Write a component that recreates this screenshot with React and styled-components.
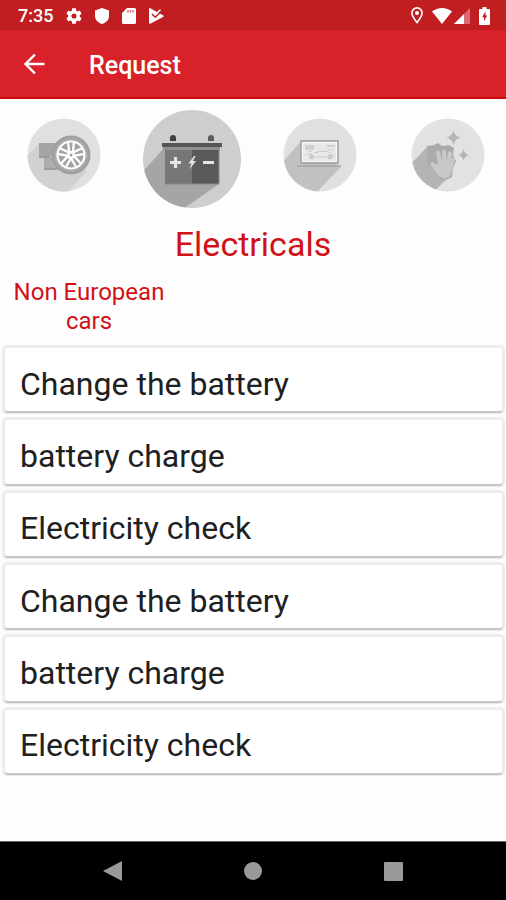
import React from "react";
import styled, { createGlobalStyle } from "styled-components";

const GlobalStyle = createGlobalStyle`
  * { box-sizing: border-box; }
  body {
    margin: 0;
    background: #fdfdfd;
    font-family: Roboto, "Liberation Sans", sans-serif;
  }
  button { font: inherit; color: inherit; border: 0; padding: 0; background: none; cursor: pointer; }
  svg { display: block; }
`;

const Screen = styled.div`
  display: flex;
  flex-direction: column;
  min-height: 100vh;
  overflow: hidden;
`;

const StatusBar = styled.div`
  display: flex;
  align-items: center;
  justify-content: space-between;
  height: 30px;
  padding: 1px 16px 0 18px;
  background: #c11e22;
  color: #fff;
`;

const StatusGroup = styled.div`
  display: flex;
  align-items: center;
  gap: ${(p) => p.$gap};
`;

const Clock = styled.time`
  font-size: 18px;
  font-weight: 500;
  line-height: 28px;
`;

const AppBar = styled.header`
  display: flex;
  align-items: center;
  gap: 41px;
  height: 69px;
  padding: 0 20px;
  background: #d82128;
  border-bottom: 2px solid #c9090c;
  color: #fff;
`;

const BackButton = styled.button`
  width: 28px;
  height: 28px;
`;

const Title = styled.h1`
  margin: 0;
  padding-top: 4px;
  font-size: 25px;
  font-weight: 500;
  line-height: 30px;
`;

const Categories = styled.nav`
  display: grid;
  grid-auto-flow: column;
  grid-auto-columns: 128px;
  height: 118px;
  padding-top: 11px;
`;

const CategoryButton = styled.button`
  display: flex;
  justify-content: center;
  align-items: flex-start;
  padding-top: ${(p) => (p.$active ? "0" : "8px")};
  opacity: ${(p) => (p.$active ? 1 : 0.5)};

  svg {
    width: ${(p) => (p.$active ? "98px" : "74px")};
    height: ${(p) => (p.$active ? "98px" : "74px")};
  }
`;

const Content = styled.main`
  flex: 1;
`;

const Heading = styled.h2`
  margin: 0;
  padding-top: 7px;
  font-size: 34px;
  font-weight: 400;
  line-height: 40px;
  text-align: center;
  color: #d01218;
`;

const GroupLabel = styled.h3`
  width: 162px;
  margin: 14px 8px 12px;
  font-size: 24px;
  font-weight: 400;
  line-height: 29px;
  text-align: center;
  color: #d01218;
`;

const ServiceList = styled.ul`
  display: grid;
  grid-auto-rows: 1fr;
  gap: 9px;
  min-height: 425px;
  margin: 0 4px 0 5px;
  padding: 0;
  list-style: none;
`;

const ServiceItem = styled.li`
  display: flex;
`;

const ServiceCard = styled.button`
  flex: 1;
  padding: 8px 15px 0;
  border-radius: 2px;
  background: #fff;
  box-shadow: 0 2px 1px #c4c4c4, 0 0 1px 3px #ededed;
  font-size: 32px;
  line-height: 38px;
  text-align: left;
  color: #202020;
`;

const SystemNav = styled.nav`
  display: flex;
  justify-content: center;
  height: 59px;
  border-top: 1px solid #666;
  background: #000;
`;

const SystemButton = styled.button`
  display: flex;
  align-items: center;
  justify-content: center;
  width: 140px;
`;

const GearIcon = () => (
  <svg width="16" height="16" viewBox="2 2 20 20" fill="#fff" aria-hidden="true">
    <path d="M19.14 12.94c.04-.3.06-.61.06-.94 0-.32-.02-.64-.07-.94l2.03-1.58c.18-.14.23-.41.12-.61l-1.92-3.32c-.12-.22-.37-.29-.59-.22l-2.39.96c-.5-.38-1.03-.7-1.62-.94l-.36-2.54c-.04-.24-.24-.41-.48-.41h-3.84c-.24 0-.43.17-.47.41l-.36 2.54c-.59.24-1.13.57-1.62.94l-2.39-.96c-.22-.08-.47 0-.59.22L2.74 8.87c-.12.21-.08.47.12.61l2.03 1.58c-.05.3-.09.63-.09.94s.02.64.07.94l-2.03 1.58c-.18.14-.23.41-.12.61l1.92 3.32c.12.22.37.29.59.22l2.39-.96c.5.38 1.03.7 1.62.94l.36 2.54c.05.24.24.41.48.41h3.84c.24 0 .44-.17.47-.41l.36-2.54c.59-.24 1.13-.56 1.62-.94l2.39.96c.22.08.47 0 .59-.22l1.92-3.32c.12-.22.07-.47-.12-.61l-2.01-1.58zM12 15.2A3.2 3.2 0 1 1 12 8.8a3.2 3.2 0 0 1 0 6.4z" />
  </svg>
);

const ShieldIcon = () => (
  <svg width="14" height="16" viewBox="0 0 14 16" fill="#fff" aria-hidden="true">
    <path d="M7 0 14 2.5V8c0 3.700-2.800 6.700-7 8-4.200-1.300-7-4.300-7-8V2.500z" />
  </svg>
);

const SdCardIcon = () => (
  <svg width="14" height="16" viewBox="0 0 14 16" aria-hidden="true">
    <path fill="#fff" d="M5 0h7.500A1.500 1.500 0 0 1 14 1.500v13a1.500 1.500 0 0 1-1.500 1.500h-11A1.500 1.500 0 0 1 0 14.500V5z" />
    <path stroke="#d5686b" strokeWidth="1.400" d="M6 2v2.500M8.500 2v2.500M11 2v2.500" />
  </svg>
);

const PlayCheckIcon = () => (
  <svg width="15" height="16" viewBox="0 0 15 16" aria-hidden="true">
    <path fill="#fff" d="M0 1.200C0 .2.800-.2 1.700.4L14 7.200c.9.500.9 1.200 0 1.700L1.700 15.600C.8 16.100 0 15.800 0 14.800z" />
    <path fill="none" stroke="#c11e22" strokeWidth="1.500" d="M3 6 6.300 9.200 12.500 3.300" />
    <path fill="none" stroke="#fff" strokeWidth="1.500" d="M6.300 6.500 11.500 1.700" />
  </svg>
);

const LocationIcon = () => (
  <svg width="12" height="17" viewBox="0 0 12 17" aria-hidden="true">
    <path fill="none" stroke="#fff" strokeWidth="1.600" d="M6 15.500C4 12.800.9 9.200.9 6a5.100 5.100 0 0 1 10.200 0c0 3.200-3.100 6.800-5.100 9.500z" />
    <circle cx="6" cy="6" r="2" fill="#fff" />
  </svg>
);

const WifiIcon = () => (
  <svg width="20" height="16" viewBox="0 0 20 16" fill="#fff" aria-hidden="true">
    <path d="M10 16 0 3.500C3 1.200 6.300 0 10 0s7 1.200 10 3.500z" />
  </svg>
);

const SignalIcon = () => (
  <svg width="16" height="16" viewBox="0 0 16 16" fill="#fff" aria-hidden="true">
    <path opacity=".35" d="M0 16 16 0v16z" />
    <path d="M0 16 10 6v10z" />
  </svg>
);

const BatteryIcon = () => (
  <svg width="11" height="18" viewBox="0 0 11 18" aria-hidden="true">
    <path fill="#fff" d="M3.500 0h4v2H10q1 0 1 1v14q0 1-1 1H1q-1 0-1-1V3q0-1 1-1h2.500z" />
    <path fill="#c11e22" d="M6.500 4.500 3 10.300h2v4l3.200-5.800H6.500z" />
  </svg>
);

const ArrowBackIcon = () => (
  <svg width="28" height="28" viewBox="0 0 28 28" fill="none" stroke="#fff" strokeWidth="2.400" aria-hidden="true">
    <path d="M24.500 14H6M15 4.500 5.500 14l9.500 9.500" />
  </svg>
);

const WheelIcon = () => (
  <svg viewBox="0 0 74 74" aria-hidden="true">
    <clipPath id="wheel-disc"><circle cx="37" cy="37" r="36.500" /></clipPath>
    <g clipPath="url(#wheel-disc)">
      <path fill="#c4c4c4" d="M0 0h74v74H0z" />
      <path fill="#a6a6a6" d="M-9 48 12 25 60 53 35 80H0z" />
    </g>
    <path fill="#505050" d="M12 25h18v13H12z" />
    <path fill="#606060" d="M17 39h20v12H17z" />
    <path fill="#3d3d3d" d="M12 38h11v2H12zM17 50h17v2H17z" />
    <circle cx="44" cy="37" r="19.500" fill="#444" />
    <circle cx="44" cy="37" r="17" fill="#5a5a5a" />
    <circle cx="44" cy="37" r="13.500" fill="#4a4a4a" stroke="#fff" strokeWidth="2.200" />
    <g stroke="#fff" strokeWidth="2.300">
      {[0, 72, 144, 216, 288].map((angle) => (
        <path key={angle} transform={`rotate(${angle} 44 37)`} d="M42.300 35 41 24M45.700 35 47 24" />
      ))}
    </g>
    <circle cx="44" cy="37" r="4" fill="#fff" />
    <circle cx="44" cy="37" r="1.500" fill="#4a4a4a" />
  </svg>
);

const CarBatteryIcon = () => (
  <svg viewBox="0 0 98 98" aria-hidden="true">
    <clipPath id="battery-disc"><circle cx="49" cy="49" r="49" /></clipPath>
    <g clipPath="url(#battery-disc)">
      <path fill="#cecece" d="M0 0h98v98H0z" />
      <path fill="#a5a5a5" d="M-4 66 22 37 76 74 30 106H0z" />
    </g>
    <path fill="#414141" d="M27 31v-3q0-3 3-3t3 3v3z" />
    <path fill="#5c5c5c" d="M65 31v-3q0-3 3-3t3 3v3z" />
    <path fill="#777" d="M22 37h54v37H22z" />
    <path fill="#595959" d="M49 37h27v37H49z" />
    <path fill="#909090" d="M20 37h57v3H20z" />
    <path fill="#565656" d="M19 33h60v4H19z" />
    <path stroke="#e4e4e4" strokeWidth="3.200" d="M27 52.500h11M32.500 47v11M60 52.500h11" />
    <path fill="#e4e4e4" d="M51 46 45.500 53.500h3l-2 6 6.500-8.500h-3.300l3-5z" />
    <path fill="none" stroke="#888" d="M22 74h54V40" />
  </svg>
);

const LaptopIcon = () => (
  <svg viewBox="0 0 74 74" aria-hidden="true">
    <clipPath id="laptop-disc"><circle cx="37" cy="37" r="36.500" /></clipPath>
    <g clipPath="url(#laptop-disc)">
      <path fill="#c4c4c4" d="M0 0h74v74H0z" />
      <path fill="#878787" d="M-6 51 17 24 58 49 28 80H0z" />
    </g>
    <path fill="#d4d4d4" stroke="#5b5b5b" strokeWidth="1.800" d="M18 23h37v22H18z" />
    <path fill="none" stroke="#f4f4f4" d="M19.500 24.500h34v19h-34z" />
    <path fill="#5d5d5d" d="M14 47h44v2H14z" />
    <path fill="#a4a4a4" d="M22 27h9v5h-9zM44 27h8v2h-8zM25 33h4v1h-4zM45 31h6v1h-6z" />
    <g fill="none" stroke="#999" strokeWidth="1">
      <path d="M31 34.500h3l2-1h8l4 1.500M32 39h12M22 38l2-2h4l2 1M45 37h5l2 2" />
      <circle cx="28.500" cy="39" r="2" fill="#999" />
      <circle cx="47" cy="39" r="2" fill="#999" />
    </g>
  </svg>
);

const CleaningIcon = () => (
  <svg viewBox="0 0 74 74" aria-hidden="true">
    <clipPath id="cleaning-disc"><circle cx="37" cy="37" r="36.500" /></clipPath>
    <g clipPath="url(#cleaning-disc)">
      <path fill="#c8c8c8" d="M0 0h74v74H0z" />
      <path fill="#6d6d6d" d="M-8 54 17 28 39 58 16 80H0z" />
    </g>
    <path fill="#5c5c5c" d="m16 28 7-1 4-2 4 3 7-1 5 3-1 7 3 6-3 7-1 9-6 3-5-1-9-11-5-3z" />
    <path fill="#949494" d="m34 61-6-3-5-6-4-6q1-3 4-1l4 2-2-13q1-3 4 0l2 9V33q2-3 4 0l1 10 1-9q3-2 4 1l-1 9 1-4q3-2 3 1l-3 12-2 5z" />
    <path fill="#717171" d="M42.500 12q1 6 7 7.500-6 1.500-7 7.500-1-6-7-7.500 6-1.500 7-7.500zM52.500 31q1 5 5.500 6-4.500 1-5.500 6-1-5-5.500-6 4.500-1 5.500-6z" />
  </svg>
);

const categories = [
  { name: "Tyres", Icon: WheelIcon },
  { name: "Electricals", Icon: CarBatteryIcon, active: true },
  { name: "Diagnostics", Icon: LaptopIcon },
  { name: "Cleaning", Icon: CleaningIcon },
];

const services = [
  "Change the battery",
  "battery charge",
  "Electricity check",
  "Change the battery",
  "battery charge",
  "Electricity check",
];

export default function App() {
  return (
    <Screen>
      <GlobalStyle />
      <StatusBar>
        <StatusGroup $gap="13px">
          <Clock>7:35</Clock>
          <GearIcon />
          <ShieldIcon />
          <SdCardIcon />
          <PlayCheckIcon />
        </StatusGroup>
        <StatusGroup $gap="9px">
          <LocationIcon />
          <StatusGroup $gap="2px">
            <WifiIcon />
            <SignalIcon />
          </StatusGroup>
          <BatteryIcon />
        </StatusGroup>
      </StatusBar>
      <AppBar>
        <BackButton aria-label="Back">
          <ArrowBackIcon />
        </BackButton>
        <Title>Request</Title>
      </AppBar>
      <Categories aria-label="Categories">
        {categories.map(({ name, Icon, active }) => (
          <CategoryButton key={name} aria-label={name} aria-pressed={!!active} $active={active}>
            <Icon />
          </CategoryButton>
        ))}
      </Categories>
      <Content>
        <Heading>Electricals</Heading>
        <GroupLabel>Non European cars</GroupLabel>
        <ServiceList>
          {services.map((service, index) => (
            <ServiceItem key={index}>
              <ServiceCard>{service}</ServiceCard>
            </ServiceItem>
          ))}
        </ServiceList>
      </Content>
      <SystemNav aria-label="System">
        <SystemButton aria-label="Back">
          <svg width="20" height="20" viewBox="0 0 20 20" fill="#999"><path d="M0 10 19 0v20z" /></svg>
        </SystemButton>
        <SystemButton aria-label="Home">
          <svg width="18" height="18" viewBox="0 0 18 18" fill="#999"><circle cx="9" cy="9" r="9" /></svg>
        </SystemButton>
        <SystemButton aria-label="Recent apps">
          <svg width="19" height="19" viewBox="0 0 19 19" fill="#999"><rect width="19" height="19" rx="1" /></svg>
        </SystemButton>
      </SystemNav>
    </Screen>
  );
}
